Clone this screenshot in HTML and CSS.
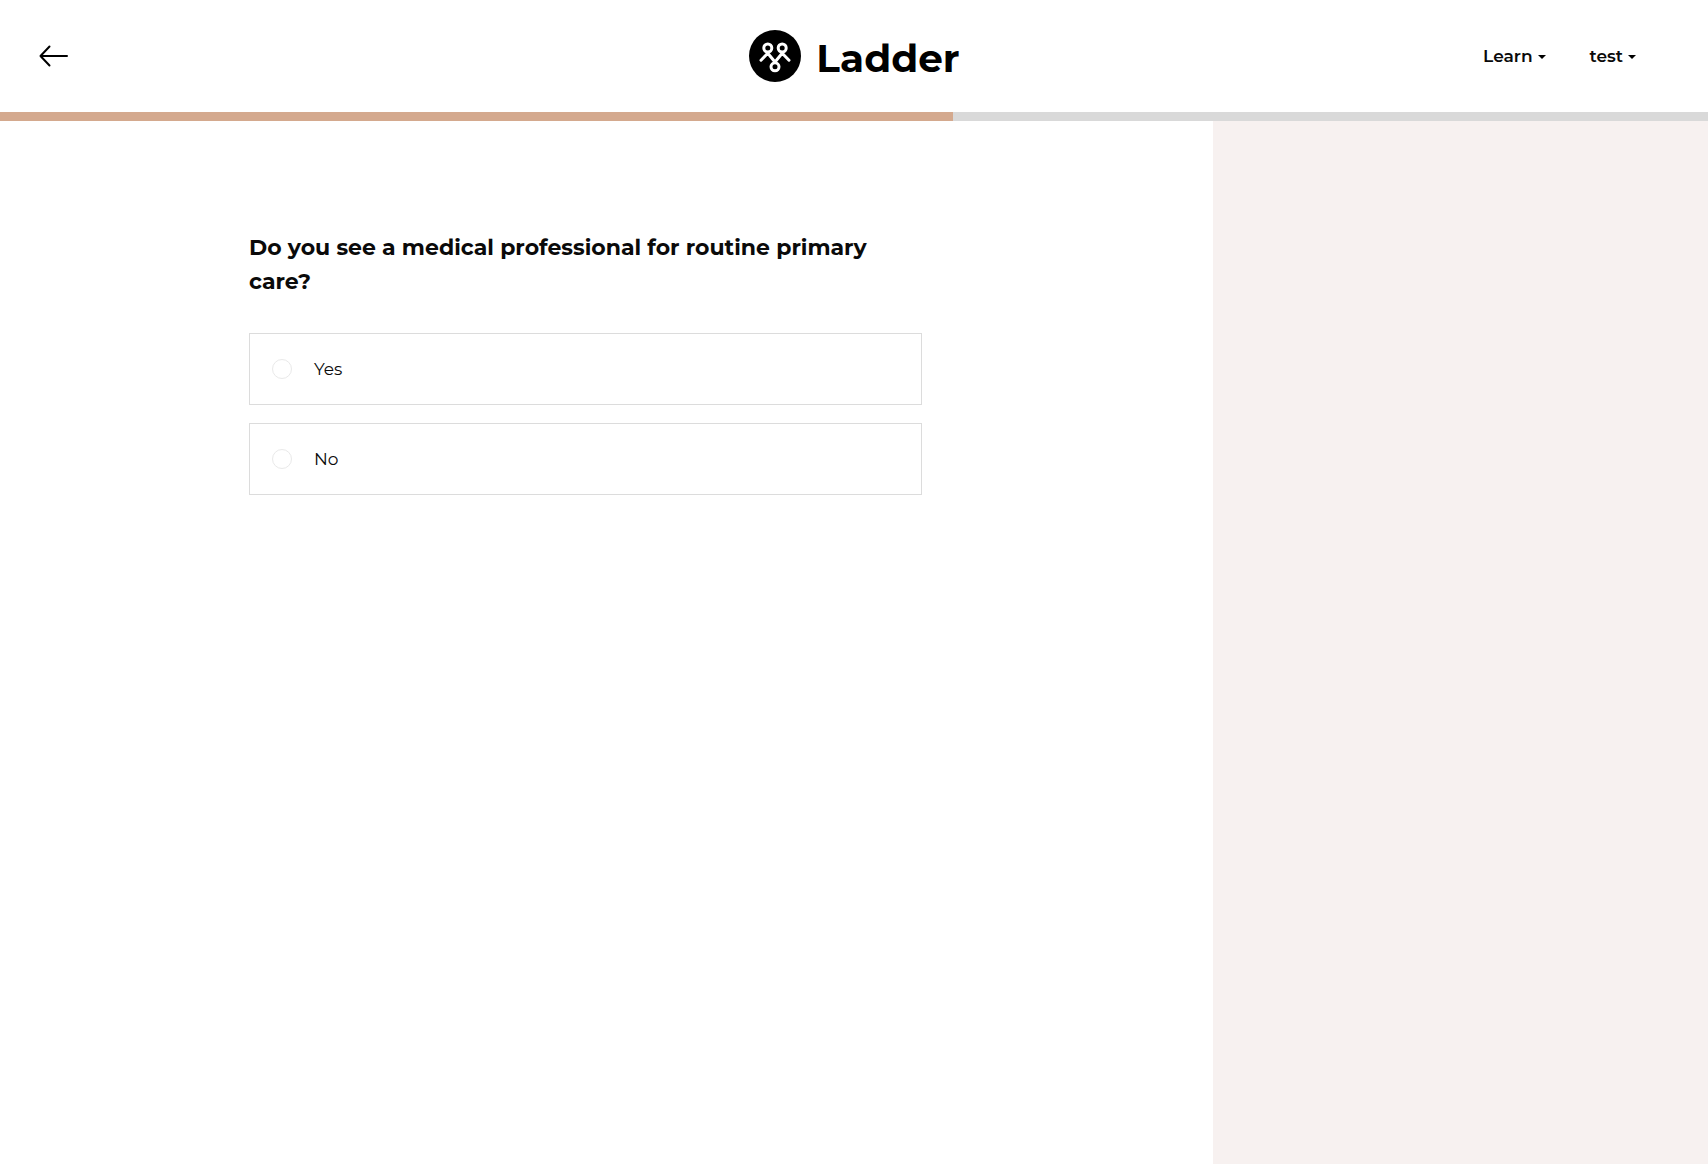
FILE: index.html
```html
<!doctype html>
<html lang="en">

<head>
  <meta charset="UTF-8">
  <meta name="viewport" content="width=device-width, initial-scale=1">
  <title>Ladder</title>
  <link rel="stylesheet" href="styles.css">
</head>

<body>
  <header class="header">
    <button class="back" type="button" aria-label="Back">
      <svg width="30" height="24" viewBox="0 0 30 24" fill="none" stroke="#000" stroke-width="2" stroke-linecap="round" stroke-linejoin="round">
        <path d="M28 12H1.5M10.5 2.5L1.5 12l9 9.5" />
      </svg>
    </button>

    <a class="logo" href="/">
      <svg width="52" height="52" viewBox="0 0 52 52" fill="none" stroke="#fff" stroke-width="3" stroke-linecap="round" stroke-linejoin="round">
        <circle cx="26" cy="26" r="26" fill="#000" stroke="none" />
        <circle cx="18.8" cy="18" r="4" />
        <circle cx="33.2" cy="18" r="4" />
        <circle cx="26" cy="36.8" r="4" />
        <path d="M12 30.2l6.8-7 7.2 8.8 7.2-8.8 6.8 7" />
      </svg>
      <span>Ladder</span>
    </a>

    <nav class="nav">
      <button class="menu" type="button" aria-haspopup="true">Learn</button>
      <button class="menu" type="button" aria-haspopup="true">test</button>
    </nav>
  </header>

  <div class="progress" role="progressbar" aria-label="Application progress" aria-valuemin="0" aria-valuemax="100" aria-valuenow="56">
    <div class="progress-bar" style="width: 55.8%"></div>
  </div>

  <div class="page">
    <main class="content">
      <form class="question">
        <h1 id="question">Do you see a medical professional for routine primary care?</h1>
        <div class="options" role="radiogroup" aria-labelledby="question">
          <label class="option" for="care-yes">
            <input type="radio" id="care-yes" name="care" value="yes">
            <span>Yes</span>
          </label>
          <label class="option" for="care-no">
            <input type="radio" id="care-no" name="care" value="no">
            <span>No</span>
          </label>
        </div>
      </form>
    </main>
    <aside class="sidebar"></aside>
  </div>
</body>

</html>
```
FILE: styles.css
```css
* {
  box-sizing: border-box;
}

body {
  display: flex;
  flex-direction: column;
  min-height: 100vh;
  margin: 0;
  font: 400 17px/24px Montserrat, Inter, sans-serif;
  background-color: #fff;
  color: #0a0a0a;
}

button {
  padding: 0;
  border: 0;
  background: none;
  font: inherit;
  color: inherit;
  cursor: pointer;
}

.header {
  display: grid;
  grid-template-columns: 1fr auto 1fr;
  align-items: center;
  height: 112px;
  padding: 0 72px 0 39px;
}

.back {
  display: flex;
  justify-self: start;
}

.logo {
  display: flex;
  align-items: center;
  gap: 15px;
  margin-left: 34px;
  font-size: 39px;
  font-weight: 700;
  line-height: 52px;
  color: #000;
  text-decoration: none;
}

.logo span {
  padding-top: 4px;
}

.nav {
  display: flex;
  justify-self: end;
  gap: 44px;
}

.menu {
  display: flex;
  align-items: center;
  gap: 5px;
  font-weight: 600;
}

.menu::after {
  content: "";
  margin-top: 2px;
  border: 4px solid transparent;
  border-top-color: #000;
  border-bottom: 0;
}

.progress {
  height: 9px;
  background: #d9d9d9;
}

.progress-bar {
  height: 100%;
  background: #d4a98e;
}

.page {
  display: flex;
  flex: 1;
}

.content {
  flex: 1;
  padding: 110px 48px 48px 249px;
}

.question {
  max-width: 673px;
}

h1 {
  margin: 0 0 34px;
  font-size: 22px;
  font-weight: 700;
  line-height: 34px;
}

.options {
  display: grid;
  gap: 18px;
}

.option {
  display: flex;
  align-items: center;
  gap: 22px;
  height: 72px;
  padding: 0 22px;
  border: 1px solid #dcdcdc;
  cursor: pointer;
}

.option input {
  appearance: none;
  width: 20px;
  height: 20px;
  margin: 0;
  border: 1px solid #e9e9e9;
  border-radius: 50%;
}

.option input:checked {
  border: 6px solid #d4a98e;
}

.sidebar {
  width: 29%;
  background: #f7f1f0;
}

@media (max-width: 1100px) {
  .content {
    padding: 48px 24px;
  }
}
```
